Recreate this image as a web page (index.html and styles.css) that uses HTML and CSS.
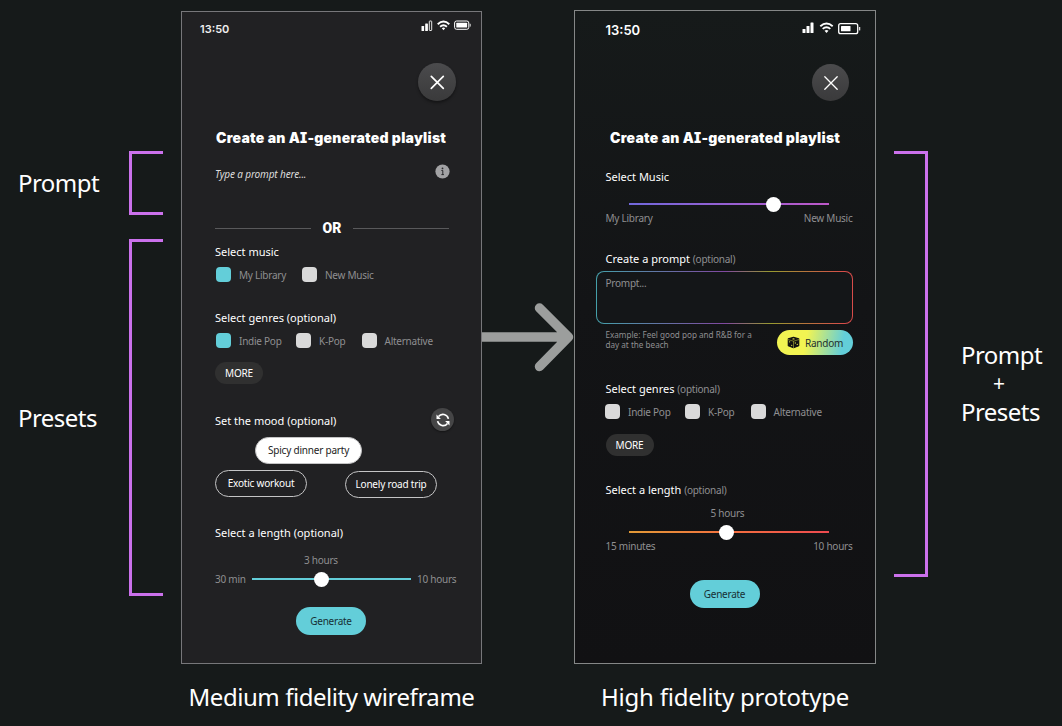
FILE: index.html
```html
<!DOCTYPE html>
<html lang="en">
<head>
<meta charset="utf-8">
<title>Playlist fidelity comparison</title>
<link rel="stylesheet" href="styles.css">
</head>
<body>
<main class="board">
  <aside class="notes notes-left">
    <div class="note note-prompt"><span class="big">Prompt</span><i class="bracket"></i></div>
    <div class="note note-presets"><span class="big">Presets</span><i class="bracket"></i></div>
  </aside>

  <figure class="column">
    <section class="phone medium">
      <header class="status">
        <span class="time">13:50</span>
        <svg class="status-icons" width="51" height="12" viewBox="0 0 51 12">
          <g fill="#fff"><rect x="0.5" y="6" width="2.6" height="5" rx=".5"/><rect x="4.2" y="3.6" width="2.7" height="7.4" rx=".5"/></g>
          <rect x="8.3" y="1" width="2.4" height="9.5" rx=".6" fill="none" stroke="#fff" stroke-width=".9"/>
          <g fill="none" stroke="#fff" stroke-width="1.9"><path d="M16.7 4.2Q22.5-1 28.3 4.2"/><path d="M19.1 6.7Q22.5 3.7 25.9 6.7"/></g>
          <path d="M20.8 8.2Q22.5 7 24.2 8.2L22.5 10.2Z" fill="#fff"/>
          <rect x="33.6" y="1" width="14.2" height="8.3" rx="2" fill="none" stroke="#fff" stroke-width="1"/>
          <rect x="35.3" y="2.7" width="10.8" height="4.9" rx=".6" fill="#fff"/><path d="M49.2 3.8v2.8" stroke="#ddd"/>
        </svg>
      </header>
      <div class="content">
        <button class="close"><svg width="16" height="16" viewBox="0 0 16 16"><path d="M2.3 2.3l12 12M14.3 2.3L2.3 14.3" stroke="#fff" stroke-width="1.7" stroke-linecap="round"/></svg></button>
        <h1 class="title">Create an AI-generated playlist</h1>
        <div class="prompt-line">
          <em class="placeholder">Type a prompt here...</em>
          <svg class="info" width="15" height="15" viewBox="0 0 15 15"><circle cx="7.5" cy="7.5" r="7.1" fill="#a2a2a4"/><circle cx="7.5" cy="4.4" r=".9" fill="#29292b"/><path d="M6.4 6.5h1.4v4.1M6.4 10.6h2.5" fill="none" stroke="#29292b" stroke-width="1"/></svg>
        </div>
        <div class="or"><i></i><b>OR</b><i></i></div>
        <h2 class="label music">Select music</h2>
        <div class="checks">
          <i class="box on"></i><span class="opt w-lib">My Library</span>
          <i class="box"></i><span class="opt">New Music</span>
        </div>
        <h2 class="label genres">Select genres (optional)</h2>
        <div class="checks">
          <i class="box on"></i><span class="opt w-indie">Indie Pop</span>
          <i class="box"></i><span class="opt w-kpop">K-Pop</span>
          <i class="box"></i><span class="opt">Alternative</span>
        </div>
        <button class="more">MORE</button>
        <div class="mood-line">
          <h2 class="label">Set the mood (optional)</h2>
          <span class="refresh"><svg width="16" height="16" viewBox="0 0 16 16"><g fill="none" stroke="#fff" stroke-width="1.6"><path d="M2.6 9.2A5.6 5.6 0 0 0 12.5 11.4"/><path d="M13.4 6.8A5.6 5.6 0 0 0 3.5 4.6"/></g><path d="M1.5 2.6v4.4h4.4zM14.5 13.4V9h-4.4z" fill="#fff"/></svg></span>
        </div>
        <div class="mood-row first"><span class="mood picked">Spicy dinner party</span></div>
        <div class="mood-row second"><span class="mood">Exotic workout</span><span class="mood lower">Lonely road trip</span></div>
        <h2 class="label length">Select a length (optional)</h2>
        <span class="opt value">3 hours</span>
        <div class="range"><span class="opt">30 min</span><div class="track"><i class="knob"></i></div><span class="opt">10 hours</span></div>
        <button class="generate">Generate</button>
      </div>
    </section>
    <figcaption class="big">Medium fidelity wireframe</figcaption>
  </figure>

  <svg class="arrow" width="92" height="72" viewBox="0 0 92 72"><path d="M-6 36H86M57.500 7L86.500 36L57.500 65.500" fill="none" stroke="#9c9e9d" stroke-width="9.500" stroke-linecap="round" stroke-linejoin="round"/></svg>

  <figure class="column">
    <section class="phone high">
      <header class="status">
        <span class="time">13:50</span>
        <svg class="status-icons" width="59" height="13" viewBox="0 0 59 13">
          <g fill="#fff"><rect x="0.500" y="7" width="3" height="4" rx=".5"/><rect x="4.500" y="4" width="3" height="7" rx=".5"/><rect x="8.500" y="0.500" width="3" height="10.500" rx=".5"/></g>
          <g fill="none" stroke="#fff" stroke-width="1.900"><path d="M18.300 4.200Q24.500-1 30.700 4.200"/><path d="M20.700 6.900Q24.500 3.600 28.300 6.900"/></g>
          <path d="M22.500 8.700Q24.500 7.300 26.500 8.700L24.500 11Z" fill="#fff"/>
          <rect x="36.700" y="1.700" width="19" height="10" rx="2" fill="none" stroke="#fff" stroke-width="1.300"/>
          <rect x="39" y="4" width="9.500" height="5.300" rx=".5" fill="#fff"/><path d="M57.600 5v3.400" stroke="#ddd" stroke-width="1.300"/>
        </svg>
      </header>
      <div class="content">
        <button class="close"><svg width="16" height="16" viewBox="0 0 16 16"><path d="M1.800 1.800l12.400 12.400M14.200 1.800L1.800 14.200" stroke="#fff" stroke-width="1.300" stroke-linecap="round"/></svg></button>
        <h1 class="title">Create an AI-generated playlist</h1>
        <h2 class="label music">Select Music</h2>
        <div class="track violet"><i class="knob"></i></div>
        <div class="ends"><span class="opt">My Library</span><span class="opt">New Music</span></div>
        <h2 class="label create">Create a prompt <small>(optional)</small></h2>
        <div class="prompt-box"><span class="opt">Prompt...</span></div>
        <div class="example-line">
          <p class="example">Example: Feel good pop and R&amp;B for a<br>day at the beach</p>
          <button class="random">
            <svg width="13" height="13" viewBox="0 0 13 13"><path d="M6.500 1.300L11.700 2.900V9.800L6.500 11.700L1.300 9.800V2.900Z" fill="#111" stroke="#111" stroke-width="1.200" stroke-linejoin="round"/><path d="M.8 3.500L6.500 5.200L12.200 3.500M6.500 5.200V12.500" fill="none" stroke="#d8da45" stroke-width=".5"/><g fill="#d8da45"><ellipse cx="6.500" cy="2.900" rx="1.200" ry=".55"/><circle cx="2.600" cy="5.800" r=".65"/><circle cx="4.700" cy="9.300" r=".65"/><circle cx="8.300" cy="7" r=".65"/><circle cx="10.300" cy="8.400" r=".65"/></g></svg>
            <span>Random</span>
          </button>
        </div>
        <h2 class="label genres">Select genres <small>(optional)</small></h2>
        <div class="checks">
          <i class="box"></i><span class="opt w-indie">Indie Pop</span>
          <i class="box"></i><span class="opt w-kpop">K-Pop</span>
          <i class="box"></i><span class="opt">Alternative</span>
        </div>
        <button class="more">MORE</button>
        <h2 class="label length">Select a length <small>(optional)</small></h2>
        <span class="opt value">5 hours</span>
        <div class="track sunset"><i class="knob"></i></div>
        <div class="ends"><span class="opt">15 minutes</span><span class="opt">10 hours</span></div>
        <button class="generate">Generate</button>
      </div>
    </section>
    <figcaption class="big high-caption">High fidelity prototype</figcaption>
  </figure>

  <aside class="notes notes-right">
    <i class="bracket right"></i>
    <div class="stack big"><span>Prompt</span><span class="plus">+</span><span>Presets</span></div>
  </aside>
</main>
</body>
</html>
```
FILE: styles.css
```css
* { box-sizing: border-box; }
body { margin: 0; background: #161a1a; color: #fff; font-family: "Noto Sans", sans-serif; }
h1, h2, p, figure { margin: 0; }
button { border: 0; padding: 0; font: inherit; color: inherit; }
svg { display: block; flex: none; }
i { display: block; flex: none; }

.board {
  display: grid;
  grid-template-columns: 181px 301px 92px 302px 186px;
  width: 1062px;
  height: 726px;
  overflow: hidden;
}
.big { font-size: 24px; line-height: 28px; letter-spacing: -.55px; white-space: nowrap; }

/* Side annotations */
.notes-left { padding-top: 151px; }
.note { display: flex; justify-content: space-between; align-items: center; padding: 0 18px 0 18px; }
.note-prompt { height: 64px; }
.note-presets { height: 357px; margin-top: 24px; }
.bracket { width: 34px; height: 100%; border: 3px solid #cb71ec; border-right: 0; }
.bracket.right { height: 426px; border: 3px solid #cb71ec; border-left: 0; }
.notes-right { display: flex; padding: 151px 0 0 18px; }
.stack { display: flex; flex-direction: column; margin: 190px 0 0 33px; }
.stack span { height: 30px; }
.stack .plus { height: 27px; padding-left: 32px; font-size: 21px; line-height: 25px; }

.column { display: flex; flex-direction: column; padding-top: 10px; }
.column figcaption { margin-top: 19px; text-align: center; letter-spacing: -.45px; }
.column .high-caption { letter-spacing: -.22px; }
.arrow { margin-top: 301px; }

/* Phones */
.phone { height: 654px; border: 1px solid #858787; }
.medium { height: 653px; margin-top: 1px; background: #212123; border-color: #77777a; }
.high { background: linear-gradient(#161a1a, #131416 45%, #111113); }
.status { display: flex; justify-content: space-between; align-items: flex-start; }
.time { font-family: Inter, sans-serif; font-weight: 600; }
.medium .status { height: 51px; padding: 8px 9px 0 18px; }
.medium .time { font-size: 11px; line-height: 16px; color: #eee; margin-top: 1px; }
.high .status { height: 52px; padding: 10px 14px 0 30.5px; }
.high .status-icons { margin-top: 1px; }
.high .time { font-size: 13px; line-height: 18px; }
.content { display: flex; flex-direction: column; align-items: flex-start; }
.medium .content { padding: 0 25px 0 33px; }
.high .content { padding: 0 22px 0 30.5px; }

.close {
  display: grid; place-items: center; align-self: flex-end;
  width: 38px; height: 38px; border-radius: 50%;
  background: linear-gradient(#4b4b4d, #3a3a3b);
}
.medium .close { box-shadow: 0 2px 3px #0006; }
.high .close { margin: 1px 4px 0 0; width: 37px; height: 37px; }
.title {
  margin: 27px 0 0 1px; font: 900 14px/20px Inter, sans-serif;
  font-feature-settings: "cv08"; letter-spacing: .26px; white-space: nowrap;
}
.high .title { margin-left: 4.5px; }
.label { font-size: 11px; line-height: 16px; font-weight: 400; white-space: nowrap; }
.label small { font-size: 10px; line-height: 0; letter-spacing: -.25px; color: #8f8f91; }
.opt { font-size: 10px; line-height: 16px; letter-spacing: -.25px; color: #8f8f91; white-space: nowrap; }

.prompt-line { display: flex; justify-content: space-between; width: 235px; height: 17px; margin-top: 16px; }
.placeholder { font-size: 10px; line-height: 16px; letter-spacing: -.13px; padding-top: 2px; color: #ddd; }
.or { display: flex; align-items: center; justify-content: space-between; width: 234px; height: 16px; margin-top: 39px; }
.or i { width: 96px; height: 1px; background: #59595b; }
.or b { font: 900 14px/16px Roboto, sans-serif; }
.medium .music { margin-top: 8px; }
.checks { display: flex; align-items: center; height: 15px; margin-top: 7px; }
.medium .checks { padding-left: 1px; }
.high .checks { margin-left: -.5px; }
.box { width: 15px; height: 15px; border-radius: 4px; background: #d9d9d9; margin-right: 8px; }
.box.on { background: #63ced9; }
.w-lib { width: 63px; }
.w-indie { width: 57px; }
.w-kpop { width: 42.500px; }
.medium .genres { margin-top: 28px; }
.more { width: 48px; height: 22px; margin-top: 14px; border-radius: 11px; background: #303030; font-size: 10px; letter-spacing: -.15px; line-height: 22px; text-align: center; }
.mood-line { display: flex; justify-content: space-between; width: 239px; height: 23px; margin-top: 24px; }
.mood-line .label { padding-top: 5px; }
.refresh { display: grid; place-items: center; width: 23px; height: 23px; border-radius: 50%; background: #454546; box-shadow: 0 1px 2px #0006; }
.mood-row { display: flex; justify-content: space-between; }
.mood-row.first { height: 26px; margin-top: 6px; padding-left: 40px; }
.mood-row.second { width: 222px; margin-top: 7px; }
.mood { width: 92px; height: 27px; border: 1px solid #c4c4c5; border-radius: 14px; font-size: 10px; letter-spacing: -.2px; line-height: 25px; text-align: center; white-space: nowrap; }
.mood.picked { width: 107px; background: #fff; color: #222; }
.mood.lower { margin-top: 1px; }
.medium .length { margin-top: 27px; }
.medium .value { margin: 11px 0 0 89px; }
.range { display: flex; align-items: center; height: 16px; margin-top: 3px; }
.range .opt:first-child { width: 37px; }
.range .opt:last-child { margin-left: 6px; }
.track { display: flex; align-items: center; width: 159px; height: 2px; background: #63ced9; }
.knob { width: 15px; height: 15px; border-radius: 50%; background: #fff; margin-left: 61.5px; }
.generate { width: 70px; height: 28px; border-radius: 14px; background: #63ced9; color: #173035; font-size: 10px; letter-spacing: -.25px; line-height: 28px; text-align: center; }
.medium .generate { margin: 20px 0 0 81px; }

.high .music { margin-top: 21px; }
.high .track { width: 199.5px; margin-left: 23.5px; }
.violet { margin-top: 18px; background: linear-gradient(90deg, #7168dc, #bd58c8); }
.violet .knob { margin-left: 137px; }
.ends { display: flex; justify-content: space-between; width: 247px; margin-top: 5px; }
.create { margin-top: 25px; }
.prompt-box {
  width: 257px; height: 53px; margin: 4px 0 0 -9.5px; padding: 3px 8.5px; border: 1px solid transparent; border-radius: 8px;
  background: linear-gradient(#141618, #141618) padding-box, linear-gradient(90deg, #45a0aa, #8048a0 50%, #989a30 68%, #d84c4a 97%) border-box;
}
.prompt-box .opt { display: block; }
.example-line { display: flex; justify-content: space-between; width: 247.5px; margin-top: 6px; }
.example { font-size: 8.15px; line-height: 10px; color: #8f8f91; white-space: nowrap; }
.random { display: flex; align-items: center; gap: 5px; width: 76px; height: 25px; padding-left: 10px; border-radius: 13px; background: linear-gradient(100deg, #f2f452 38%, #63ced9 85%); color: #24302c; font-size: 10px; letter-spacing: -.25px; }
.high .genres { margin-top: 26px; }
.high .more { margin-top: 14.5px; }
.high .length { margin-top: 26.5px; }
.high .value { margin: 7px 0 0 105px; }
.sunset { margin-top: 10px; background: linear-gradient(90deg, #e29a37, #f4703f 50%, #ee4a50); }
.sunset .knob { margin-left: 90px; }
.high .generate { margin: 26px 0 0 84px; }
```
